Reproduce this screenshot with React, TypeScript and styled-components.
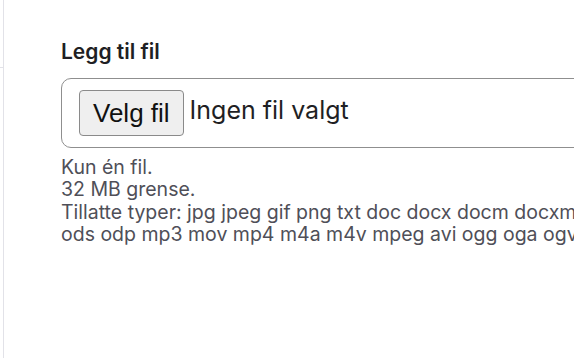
import React from 'react';
import styled, { createGlobalStyle } from 'styled-components';

const GlobalStyle = createGlobalStyle`
    html,
    body {
        margin: 0;
        padding: 0;
        background: #ffffff;
        overflow: hidden;
    }

    body {
        font-family: Inter, 'Noto Sans', sans-serif;
        color: #1f1f24;
    }
`;

const Page = styled.div`
    display: flex;
    min-height: 358px;
    width: 1000px;
`;

const Sidebar = styled.aside`
    width: 3px;
    flex-shrink: 0;
    border-right: 1px solid #e2e2e8;
`;

const SidebarHead = styled.div`
    height: 67px;
    border-bottom: 1px solid #e2e2e8;
`;

const Main = styled.main`
    flex: 1;
    padding: 40px 0 0 57px;
`;

const Field = styled.div`
    display: flex;
    flex-direction: column;
    width: 860px;
`;

const Label = styled.label`
    font-size: 21px;
    line-height: 24px;
    font-weight: 600;
    color: #1f1f24;
    margin-bottom: 14px;
`;

const FileBox = styled.div`
    display: flex;
    align-items: center;
    height: 68px;
    padding: 0 17px;
    border: 1px solid #8f8f8f;
    border-radius: 10px;
`;

const PickButton = styled.button`
    height: 46px;
    padding: 0 13px;
    font-family: 'Liberation Sans', Arial, sans-serif;
    font-size: 26px;
    line-height: 30px;
    color: #111111;
    background: #efefef;
    border: 1px solid #8a8a8a;
    border-radius: 4px;
`;

const FileName = styled.span`
    margin-left: 6px;
    margin-bottom: 6px;
    font-size: 25px;
    line-height: 30px;
    color: #1f1f24;
`;

const Help = styled.div`
    margin-top: 8px;
    font-size: 19.5px;
    line-height: 22.3px;
    color: #4f4f58;
`;

const HelpLine = styled.div`
    white-space: nowrap;
`;

const helpLines = [
    'Kun én fil.',
    '32 MB grense.',
    'Tillatte typer: jpg jpeg gif png txt doc docx docm docxm xls xlsx pdf ppt pps odt',
    'ods odp mp3 mov mp4 m4a m4v mpeg avi ogg oga ogv weba webp webm'
];

const App = () => {
    return (
        <>
            <GlobalStyle />
            <Page>
                <Sidebar>
                    <SidebarHead />
                </Sidebar>
                <Main>
                    <Field>
                        <Label>Legg til fil</Label>
                        <FileBox>
                            <PickButton type="button">Velg fil</PickButton>
                            <FileName>Ingen fil valgt</FileName>
                        </FileBox>
                        <Help>
                            {helpLines.map((line) => (
                                <HelpLine key={line}>{line}</HelpLine>
                            ))}
                        </Help>
                    </Field>
                </Main>
            </Page>
        </>
    );
};

export default App;
